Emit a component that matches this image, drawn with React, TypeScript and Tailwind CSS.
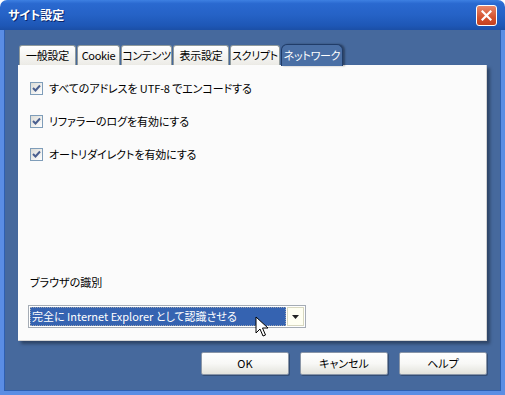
import React from "react";

const font = "font-['Noto_Sans_CJK_JP','Noto_Sans',sans-serif] [font-feature-settings:'palt']";

function Check({ label }: { label: string }) {
  return (
    <div className="flex items-center gap-[6px] h-[14px]">
      <div className="w-[13px] h-[13px] border border-[#7f9db9] bg-gradient-to-br from-[#dcdcd7] to-[#ffffff] flex items-center justify-center">
        <svg width="9" height="9" viewBox="0 0 9 9">
          <path d="M1 4 L3.5 6.5 L8 1.5" stroke="#4a5f8f" strokeWidth="2" fill="none" />
        </svg>
      </div>
      <span className="text-[11px] leading-none text-black tracking-[-0.1px] whitespace-pre">{label}</span>
    </div>
  );
}

function Tab({ label, w, active }: { label: string; w: string; active?: boolean }) {
  if (active) {
    return (
      <div className={`${w} shrink-0 whitespace-nowrap tracking-[-0.3px] h-[22px] -mb-[1px] flex items-center justify-center rounded-t-[6px] border border-b-0 border-[#203c68] bg-[#4a6fa5] text-white text-[11px] leading-none shadow-[2px_0_2px_rgba(0,0,0,0.35)] z-10`}>
        {label}
      </div>
    );
  }
  return (
    <div className={`${w} shrink-0 whitespace-nowrap tracking-[-0.3px] h-[20px] mr-[1px] flex items-center justify-center rounded-t-[3px] border border-b-0 border-[#919b9c] bg-gradient-to-b from-[#ffffff] to-[#ecebe6] text-black text-[11px] leading-none`}>
      {label}
    </div>
  );
}

function Btn({ label }: { label: string }) {
  return (
    <div className="w-[88px] h-[23px] flex items-center justify-center border border-[#8a96a8] rounded-[2px] bg-gradient-to-b from-[#ffffff] via-[#f8f8f6] to-[#e3e3dc] text-[11px] leading-none text-black shadow-[1px_1px_0_rgba(0,0,0,0.25)]">
      {label}
    </div>
  );
}

export default function App() {
  return (
    <div className={`w-[505px] h-[395px] flex flex-col ${font}`}>
      {/* title bar */}
      <div className="h-[30px] shrink-0 rounded-t-[7px] bg-[linear-gradient(to_bottom,#3d80e2_0%,#2a69d0_12%,#2562c6_50%,#1e57b6_85%,#1b4fa6_100%)] flex items-center justify-between pl-[8px] pr-[8px]">
        <span className="text-white text-[12px] font-bold leading-none [text-shadow:1px_1px_0_#0a246a]">サイト設定</span>
        <div className="w-[21px] h-[21px] rounded-[3px] border border-white bg-[linear-gradient(to_bottom,#e8876a,#d5532f_60%,#c4401f)] flex items-center justify-center">
          <svg width="11" height="11" viewBox="0 0 11 11">
            <path d="M1.5 1.5 L9.5 9.5 M9.5 1.5 L1.5 9.5" stroke="white" strokeWidth="2.2" strokeLinecap="square" />
          </svg>
        </div>
      </div>
      {/* body */}
      <div className="flex-1 flex flex-col bg-[#46699d] border-x-[4px] border-b-[4px] border-[#5a8de4] shadow-[inset_1px_0_0_#2e5fb0,inset_-1px_0_0_#2e5fb0,inset_0_-1px_0_#2e5fb0]">
        <div className="flex flex-col pl-[14px] pr-[14px] pt-[13px]">
          <div className="flex items-end h-[22px] pl-[1px]">
            <Tab label="一般設定" w="w-[57px]" />
            <Tab label="Cookie" w="w-[43px]" />
            <Tab label="コンテンツ" w="w-[51px]" />
            <Tab label="表示設定" w="w-[56px]" />
            <Tab label="スクリプト" w="w-[50px]" />
            <Tab label="ネットワーク" w="w-[62px]" active />
          </div>
          <div className="h-[276px] bg-[#fbfbfb] border-r border-b border-[#d4d4d4] shadow-[3px_3px_3px_rgba(0,0,0,0.35)] flex flex-col pl-[12px] pt-[16px]">
            <div className="flex flex-col gap-[19px]">
              <Check label="すべてのアドレスを UTF-8 でエンコードする" />
              <Check label="リファラーのログを有効にする" />
              <Check label="オートリダイレクトを有効にする" />
            </div>
            <div className="mt-[116px] text-[11px] leading-none text-black">ブラウザの識別</div>
            <div className="relative mt-[17px] w-[278px] h-[23px] -ml-[2px] flex border border-[#a5acb5] bg-white p-[1px]">
              <div className="flex-1 flex items-center bg-[#3563b1] outline-1 outline-dotted outline-[#9aa2b0] -outline-offset-1 pl-[2px] text-white text-[11px] leading-none whitespace-pre">
                完全に Internet Explorer として認識させる
              </div>
              <div className="w-[17px] ml-[1px] flex items-center justify-center bg-[#fffff2] border border-[#d8d8c0]">
                <svg width="7" height="4" viewBox="0 0 7 4">
                  <path d="M0 0 H7 L3.5 4 Z" fill="#222" />
                </svg>
              </div>
              <svg className="absolute left-[226px] top-[10px]" width="14" height="22" viewBox="0 0 14 22">
                <path d="M1 1 L1 17 L5 13 L8 20 L10.5 19 L7.5 12 L13 12 Z" fill="white" stroke="black" strokeWidth="1" strokeLinejoin="miter" />
              </svg>
            </div>
          </div>
        </div>
        <div className="flex justify-end gap-[11px] pr-[14px] pt-[11px]">
          <Btn label="OK" />
          <Btn label="キャンセル" />
          <Btn label="ヘルプ" />
        </div>
      </div>
    </div>
  );
}
